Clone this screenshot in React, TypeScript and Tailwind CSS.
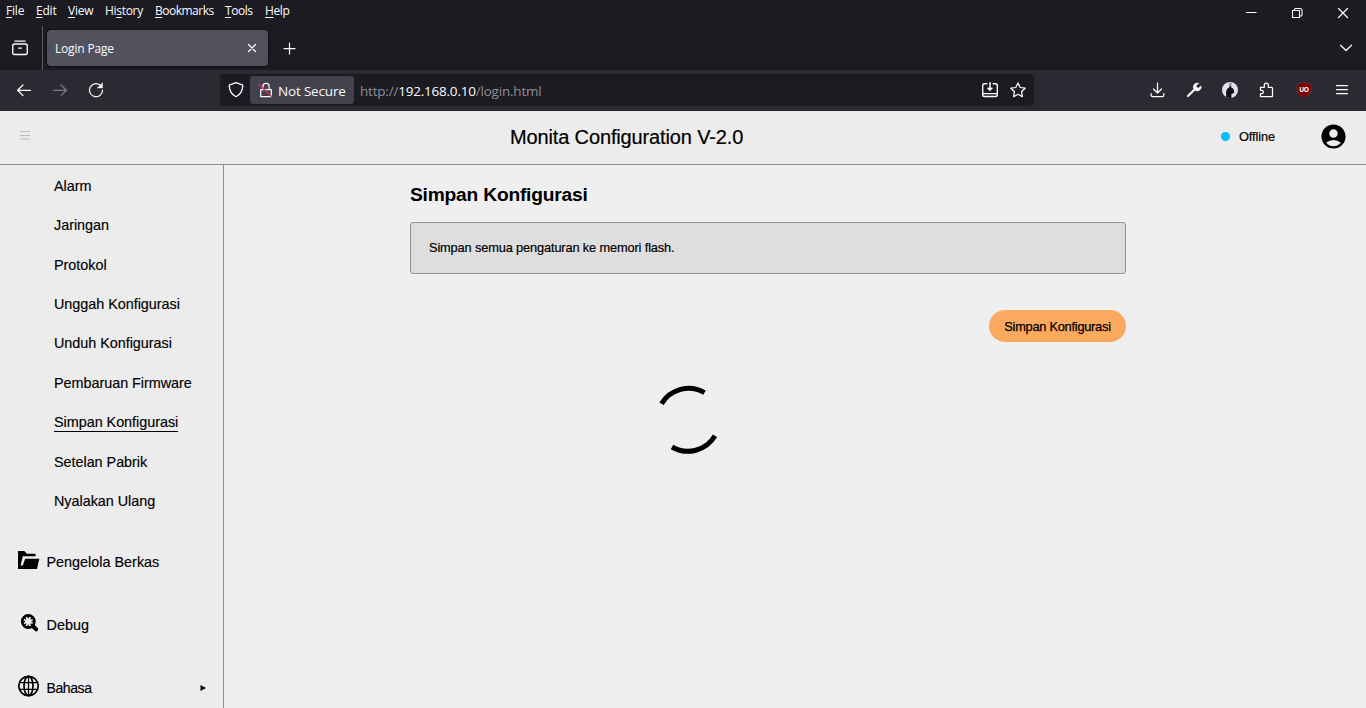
import React from "react";
import { MdAccountCircle } from "react-icons/md";

const ui = "font-['Open_Sans','Noto_Sans',sans-serif]";

const menus = [
  { pre: "", key: "F", post: "ile", cls: "w-[30px] tracking-[-0.2px]" },
  { pre: "", key: "E", post: "dit", cls: "w-[32px] tracking-[-0.2px]" },
  { pre: "", key: "V", post: "iew", cls: "w-[37px] tracking-[-0.2px]" },
  { pre: "Hi", key: "s", post: "tory", cls: "w-[50px] tracking-[-0.3px]" },
  { pre: "", key: "B", post: "ookmarks", cls: "w-[70px] tracking-[-0.5px]" },
  { pre: "", key: "T", post: "ools", cls: "w-[40px] tracking-[-0.45px]" },
  { pre: "", key: "H", post: "elp", cls: "w-[40px] tracking-[-0.4px]" },
];

const links = [
  "Alarm",
  "Jaringan",
  "Protokol",
  "Unggah Konfigurasi",
  "Unduh Konfigurasi",
  "Pembaruan Firmware",
  "Simpan Konfigurasi",
  "Setelan Pabrik",
  "Nyalakan Ulang",
];

function Icon({ size = 16, className = "", children }: { size?: number; className?: string; children: React.ReactNode }) {
  return (
    <svg
      width={size}
      height={size}
      viewBox="0 0 16 16"
      fill="none"
      stroke="currentColor"
      strokeWidth="1.25"
      strokeLinecap="round"
      strokeLinejoin="round"
      className={`shrink-0 ${className}`}
    >
      {children}
    </svg>
  );
}

function TitleBar() {
  return (
    <div className="flex h-[26px] justify-between">
      <div className="flex h-[22px] items-center pl-[6px] text-[12px] leading-[22px]">
        {menus.map((m) => (
          <span key={m.key} className={`whitespace-nowrap ${m.cls}`}>
            {m.pre}
            <span className="underline underline-offset-2">{m.key}</span>
            {m.post}
          </span>
        ))}
      </div>
      <div className="flex items-center gap-[30px] pr-[15px]">
        <Icon>
          <path d="M3 7.500h10.500" strokeWidth="1" strokeLinecap="butt" />
        </Icon>
        <Icon>
          <path d="M3.500 5.500h7v7h-7zM5.500 5V4.500q0-1 1-1h4.500q2 0 2 2v4.500q0 1-1 1H11" strokeWidth="1.100" />
        </Icon>
        <Icon>
          <path d="M3.500 3.500l9 9M12.500 3.500l-9 9" strokeWidth="1.200" />
        </Icon>
      </div>
    </div>
  );
}

function TabStrip() {
  return (
    <div className="flex h-[44px] items-stretch">
      <div className="flex w-[43px] items-center border-r border-[#5a5962] pl-[12px]">
        <Icon>
          <path d="M2.800 1.100h10.400" />
          <path d="M2.700 4h10.600q2 0 2 2v6.500q0 2-2 2H2.700q-2 0-2-2V6q0-2 2-2z" strokeWidth="1.400" />
          <path d="M6.500 8h3" />
        </Icon>
      </div>
      <div className="ml-[4px] mt-[4px] flex h-[36px] w-[221px] items-center justify-between rounded-[4px] bg-[#52525e] pl-[8px] pr-[8px] text-[12px] shadow-[0_0_2px_#000]">
        <span className="pt-[2px] tracking-[-0.18px]">Login Page</span>
        <Icon>
          <path d="M4.500 4.500l7 7M11.500 4.500l-7 7" />
        </Icon>
      </div>
      <div className="flex flex-1 items-center justify-between pl-[14px] pr-[12px]">
        <Icon>
          <path d="M7.500 3v11M2 8.500h11" />
        </Icon>
        <Icon>
          <path d="M2.500 5.200l5.500 5.300 5.500-5.300" />
        </Icon>
      </div>
    </div>
  );
}

function NavBar() {
  return (
    <div className="flex h-[41px] items-center bg-[#2b2a33] pb-px">
      <div className="flex w-[220px] items-center gap-[20px] pl-[16px]">
        <Icon>
          <path d="M14.600 8.300H1.600M7 3L1.600 8.300 7 13.600" />
        </Icon>
        <Icon className="text-[#7b7a82]">
          <path d="M1.400 8.300h13M9 3l5.400 5.300L9 13.600" />
        </Icon>
        <Icon>
          <path d="M13 4a6.500 6.500 0 1 0 1.500 4.200" />
          <path d="M14.500 1v5h-5z" fill="currentColor" strokeWidth="0.4" />
        </Icon>
      </div>
      <div className="flex h-[32px] w-[814px] items-center rounded-[4px] bg-[#1c1b22] pr-[8px]">
        <Icon className="ml-[8px]">
          <path d="M8 .6l6.200 2.300c.5.200.7.500.6 1C14.500 8.600 12.500 12.600 8 14.800 3.500 12.600 1.500 8.600 1.200 3.900c-.1-.5.1-.8.6-1z" />
        </Icon>
        <div className="ml-[6px] flex h-[28px] w-[104px] items-center rounded-[3px] bg-[#42414d] pl-[8px] text-[13.5px]">
          <Icon>
            <path d="M2.700 7.600h10.600v7H2.700zM4.900 7V4.400a3.100 3.100 0 0 1 6.200 0V7" />
            <path d="M.8 2.200L14 15" stroke="#e22850" strokeWidth="1.200" />
          </Icon>
          <span className="ml-[4px] whitespace-nowrap pt-[2px] tracking-[-0.18px]">Not Secure</span>
        </div>
        <span className="ml-[6px] flex-1 whitespace-nowrap pt-[2px] text-[13.5px] tracking-[-0.21px] text-[#8f8e96]">
          http://<span className="text-[#fbfbfe]">192.168.0.10</span>/login.html
        </span>
        <Icon>
          <path d="M4.800 1.700H2.500Q.7 1.700.7 3.500v9.200q0 1.800 1.800 1.800h11q1.800 0 1.800-1.800V3.500q0-1.800-1.800-1.800h-2.300M.7 11.600h14.600" strokeWidth="1.400" />
          <path d="M8 .7v6" strokeWidth="1.500" />
          <path d="M5.400 6h5.200L8 8.800z" fill="currentColor" strokeWidth=".6" />
        </Icon>
        <Icon className="ml-[12px]">
          <path d="M8 .9l2.200 4.600 5 .7-3.700 3.500.9 5L8 12.300l-4.400 2.400.9-5L.8 6.200l5-.7z" />
        </Icon>
      </div>
      <div className="ml-[115px] flex items-center gap-[20px]">
        <Icon>
          <path d="M8.500 1v9.700M4.500 7l4 4 4-4M2.200 11.500v1.700q0 1.300 1.300 1.300h10q1.300 0 1.300-1.300v-1.700" />
        </Icon>
        <Icon className="ml-px">
          <path d="M2 14L9 7" strokeWidth="2.100" />
          <path d="M12.700 1.200a4 4 0 1 0 2.400 2.700l-2.600 2-2-.4-.3-2z" fill="currentColor" strokeWidth="0.500" />
        </Icon>
        <svg width="16" height="16" viewBox="0 0 16 16" className="shrink-0">
          <circle cx="8" cy="8" r="8" fill="#dfe3ee" />
          <path d="M4 14.900C4.600 12.500 3.600 11.400 4.400 8.600 5 6.600 6.200 6 7 5.700L7.200 4h2L9.400 5.700C11.500 6.100 12.300 8 12.100 11L9.500 12 9.300 15.900Q6.300 16 4 14.900z" fill="#111118" />
          <path d="M7 1h2.600v3.600H7z" fill="#8f949c" />
        </svg>
        <Icon>
          <path d="M2.500 5.300h3.800V3.200a2 2 0 0 1 4 0v2.100h3.200q1 0 1 1v8.200h-12v-3h1.300a1.600 1.600 0 0 0 0-3.200H2.500z" />
        </Icon>
        <div className="relative ml-[2px] flex size-[16px] items-center justify-center">
          <svg width="16" height="16" viewBox="0 0 16 16" className="absolute inset-0">
            <path d="M8 0Q11 1.800 15 1.900V7.500Q14.600 12.600 8 16 1.400 12.600 1 7.500V1.900Q5 1.800 8 0z" fill="#800000" stroke="#5c4a4f" strokeWidth=".5" />
          </svg>
          <span className="relative pt-px text-[6.5px] font-bold leading-none tracking-[-0.4px] text-white">UO</span>
        </div>
        <Icon className="ml-[2px]">
          <path d="M2.500 3.500h11M2.500 7.500h11M2.500 11.500h11" />
        </Icon>
      </div>
    </div>
  );
}

function FolderIcon() {
  return (
    <svg width="22" height="19" viewBox="0 0 22 19" fill="#000">
      <path d="M0 0h6.300L8.800 2.800H17.500v2.400H4.800L2.600 14.500H4.800L7.200 7.800H21.300L19 18H0z" />
    </svg>
  );
}

function DebugIcon() {
  return (
    <svg width="20" height="20" viewBox="0 0 20 20" fill="none" stroke="#000">
      <circle cx="8.300" cy="7.500" r="6.100" strokeWidth="2.600" />
      <path d="M8.300 2v2.200M8.300 10.800V13M2.800 7.500H5M11.600 7.500h2.200M4.400 3.600l1.600 1.600M12.200 3.600l-1.600 1.600M4.400 11.400l1.600-1.600M12.200 11.400l-1.600-1.600" strokeWidth="1.300" />
      <path d="M13 12.300l3.200 3" strokeWidth="4" strokeLinecap="round" />
    </svg>
  );
}

function GlobeIcon() {
  return (
    <svg width="22" height="22" viewBox="0 0 22 22" fill="none" stroke="#000" strokeWidth="1.700">
      <circle cx="10.500" cy="11" r="9.700" />
      <ellipse cx="10.500" cy="11" rx="4.500" ry="9.700" />
      <path d="M1.500 7.700h18M1.500 14.300h18M10.500 1v20" strokeWidth="1.300" />
    </svg>
  );
}

function Sidebar() {
  return (
    <nav className="flex w-[224px] shrink-0 flex-col border-r border-[#8e8e90] bg-[#ececec] pt-[1.600px] text-[14.4px] [-webkit-text-stroke:0.15px_#000]">
      <div className="flex flex-col pl-[54px]">
        {links.map((l) => (
          <div key={l} className="flex h-[39.4px] items-center">
            <span
              className={
                l === "Simpan Konfigurasi"
                  ? "border-b border-black leading-[18px] tracking-[-0.03px]"
                  : "leading-[19px] tracking-[-0.03px]"
              }
            >
              {l}
            </span>
          </div>
        ))}
      </div>
      <div className="mt-[10.400px] flex flex-col pl-[18px]">
        <div className="flex h-[63px] items-center">
          <span className="flex w-[28.500px] pb-[5px]"><FolderIcon /></span>
          <span>Pengelola Berkas</span>
        </div>
        <div className="flex h-[63px] items-center">
          <span className="flex w-[28.500px] pb-[4px] pl-[2px]"><DebugIcon /></span>
          <span>Debug</span>
        </div>
        <div className="flex h-[63px] items-center pr-[17px]">
          <span className="flex w-[28.500px] pb-[6px]"><GlobeIcon /></span>
          <span className="flex-1 pb-[2px] text-[14px] tracking-[-0.4px]">Bahasa</span>
          <svg width="6" height="6" viewBox="0 0 6 6" className="mb-[2px]"><path d="M.5 0L6 3 .5 6z" /></svg>
        </div>
      </div>
    </nav>
  );
}

export default function App() {
  return (
    <div className="flex h-[708px] w-[1366px] flex-col overflow-hidden bg-[#efefef] font-['Liberation_Sans',Arial,sans-serif] text-black">
      <div className={`h-[111px] shrink-0 bg-[#1c1b22] text-[#fbfbfe] ${ui}`}>
        <TitleBar />
        <TabStrip />
        <NavBar />
      </div>
      <header className="flex h-[54px] shrink-0 items-center border-b border-[#8e8e90] bg-[#ececec] pb-[2px]">
        <div className="w-[510px] pb-[2px] pl-[20px]">
          <svg width="10" height="9" viewBox="0 0 10 9" stroke="#bdbdbd"><path d="M0 .5h10M0 4.500h10M0 8h10" /></svg>
        </div>
        <h1 className="w-[710px] text-[20px] tracking-[-0.14px] [-webkit-text-stroke:0.2px_#000]">Monita Configuration V-2.0</h1>
        <span className="ml-[1px] size-[9px] rounded-full bg-[#00bfff]" />
        <span className="ml-[9px] w-[80px] text-[12.8px] tracking-[-0.1px] [-webkit-text-stroke:0.2px_#000]">Offline</span>
        <MdAccountCircle size={29} />
      </header>
      <div className="flex min-h-0 flex-1">
        <Sidebar />
        <main className="flex w-[902px] flex-col pl-[186px] pt-[18px]">
          <h2 className="text-[19.2px] font-bold leading-[24px] tracking-[-0.2px]">Simpan Konfigurasi</h2>
          <div className="mt-[15px] flex h-[52px] items-center rounded-[3px] border border-[#8e8e90] bg-[#dedede] pl-[18px] text-[12.8px]">
            <span className="tracking-[-0.14px] [-webkit-text-stroke:0.2px_#000]">Simpan semua pengaturan ke memori flash.</span>
          </div>
          <button className="mt-[36px] flex h-[32px] w-[137px] items-center justify-center self-end rounded-full bg-[#fba95f] pt-px text-[12.8px] tracking-[-0.25px] [-webkit-text-stroke:0.25px_#000]">
            Simpan Konfigurasi
          </button>
          <svg className="ml-[243px] mt-[43px]" width="70" height="70" viewBox="0 0 70 70" fill="none" stroke="#000" strokeWidth="5">
            <path d="M8.500 18.800A31.600 31.600 0 0 1 51.500 7.600" />
            <path d="M19 62A31.600 31.600 0 0 0 62 50.800" />
          </svg>
        </main>
      </div>
    </div>
  );
}
